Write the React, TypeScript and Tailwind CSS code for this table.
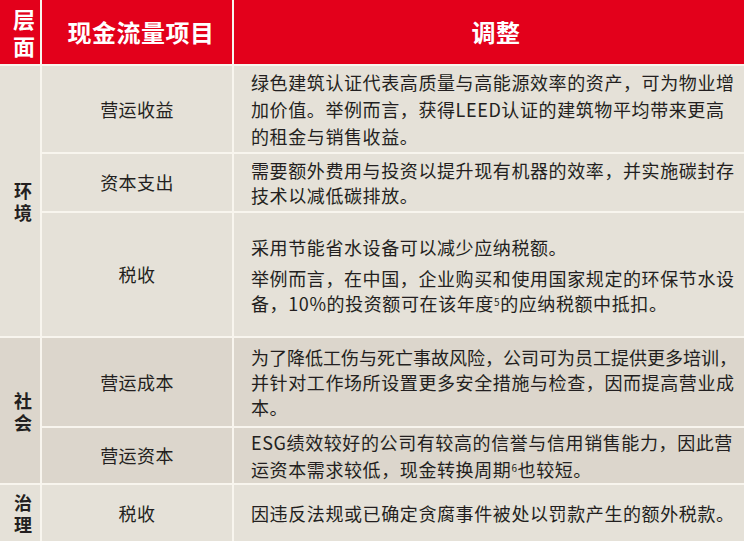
import type { ReactNode } from "react"

const font = { fontFamily: '"Noto Sans CJK SC", "Noto Sans", sans-serif' }

function Lines({ lines }: { lines: ReactNode[] }) {
  return (
    <div>
      {lines.map((l, i) => (
        <div key={i} className="whitespace-nowrap">
          {l}
        </div>
      ))}
    </div>
  )
}

function Item({ children, tone }: { children: ReactNode; tone: "env" | "soc" }) {
  return (
    <div
      className={`flex items-center justify-center text-[18px] tracking-[0.4px] text-[#231f20] ${
        tone === "env" ? "bg-[#e5e1d8]" : "bg-[#dcd6cc]"
      }`}
    >
      {children}
    </div>
  )
}

function Detail({ children, tone }: { children: ReactNode; tone: "env" | "soc" }) {
  return (
    <div
      className={`flex items-center pl-[17px] text-[18px] leading-[25px] tracking-[0.6px] text-[#231f20] ${
        tone === "env" ? "bg-[#e5e1d8]" : "bg-[#dcd6cc]"
      }`}
    >
      {children}
    </div>
  )
}

function Section({ label, tone, rows }: { label: string; tone: "env" | "soc"; rows: string }) {
  return (
    <div
      className={`flex flex-col items-center justify-center pl-[6px] text-[18px] font-bold leading-[22px] text-[#231f20] ${rows} ${
        tone === "env" ? "bg-[#e5e1d8]" : "bg-[#dcd6cc]"
      }`}
    >
      {label.split("").map((c) => (
        <span key={c}>{c}</span>
      ))}
    </div>
  )
}

export default function App() {
  return (
    <div
      className="grid h-[541px] w-[744px] grid-cols-[40px_190px_1fr] grid-rows-[64px_86px_57px_123px_88px_55px_56px] gap-[2px] bg-[#f8f5ee]"
      style={font}
    >
      <div className="flex flex-col items-center justify-center bg-[#e3001b] pl-[8px] text-[22px] font-bold leading-[27px] text-white">
        <span>层</span>
        <span>面</span>
      </div>
      <div className="flex items-center justify-center bg-[#e3001b] pl-[8px] text-[24px] font-bold tracking-[0.5px] text-white">
        现金流量项目
      </div>
      <div className="flex items-center justify-center bg-[#e3001b] pl-[14px] text-[24px] font-bold tracking-[0.5px] text-white">
        调整
      </div>

      <Section label="环境" tone="env" rows="row-span-3" />
      <Item tone="env">营运收益</Item>
      <Detail tone="env">
        <div className="leading-[27px]">
          <Lines
            lines={[
              "绿色建筑认证代表高质量与高能源效率的资产，可为物业增",
              "加价值。举例而言，获得LEED认证的建筑物平均带来更高",
              "的租金与销售收益。",
            ]}
          />
        </div>
      </Detail>
      <Item tone="env">资本支出</Item>
      <Detail tone="env">
        <Lines lines={["需要额外费用与投资以提升现有机器的效率，并实施碳封存", "技术以减低碳排放。"]} />
      </Detail>
      <Item tone="env">税收</Item>
      <Detail tone="env">
        <div className="pt-[2px]">
          <div className="mb-[6px] whitespace-nowrap">采用节能省水设备可以减少应纳税额。</div>
          <Lines
            lines={[
              "举例而言，在中国，企业购买和使用国家规定的环保节水设",
              <>
                备，10%的投资额可在该年度<sup className="text-[10px]">5</sup>的应纳税额中抵扣。
              </>,
            ]}
          />
        </div>
      </Detail>

      <Section label="社会" tone="soc" rows="row-span-2" />
      <Item tone="soc">营运成本</Item>
      <Detail tone="soc">
        <Lines
          lines={[
            <span className="tracking-[0px]">为了降低工伤与死亡事故风险，公司可为员工提供更多培训，</span>,
            "并针对工作场所设置更多安全措施与检查，因而提高营业成",
            "本。",
          ]}
        />
      </Detail>
      <Item tone="soc">营运资本</Item>
      <Detail tone="soc">
        <div className="leading-[27px]">
          <Lines
            lines={[
              "ESG绩效较好的公司有较高的信誉与信用销售能力，因此营",
              <>
                运资本需求较低，现金转换周期<sup className="text-[10px]">6</sup>也较短。
              </>,
            ]}
          />
        </div>
      </Detail>

      <Section label="治理" tone="env" rows="" />
      <Item tone="env">税收</Item>
      <Detail tone="env">
        <Lines lines={["因违反法规或已确定贪腐事件被处以罚款产生的额外税款。"]} />
      </Detail>
    </div>
  )
}
